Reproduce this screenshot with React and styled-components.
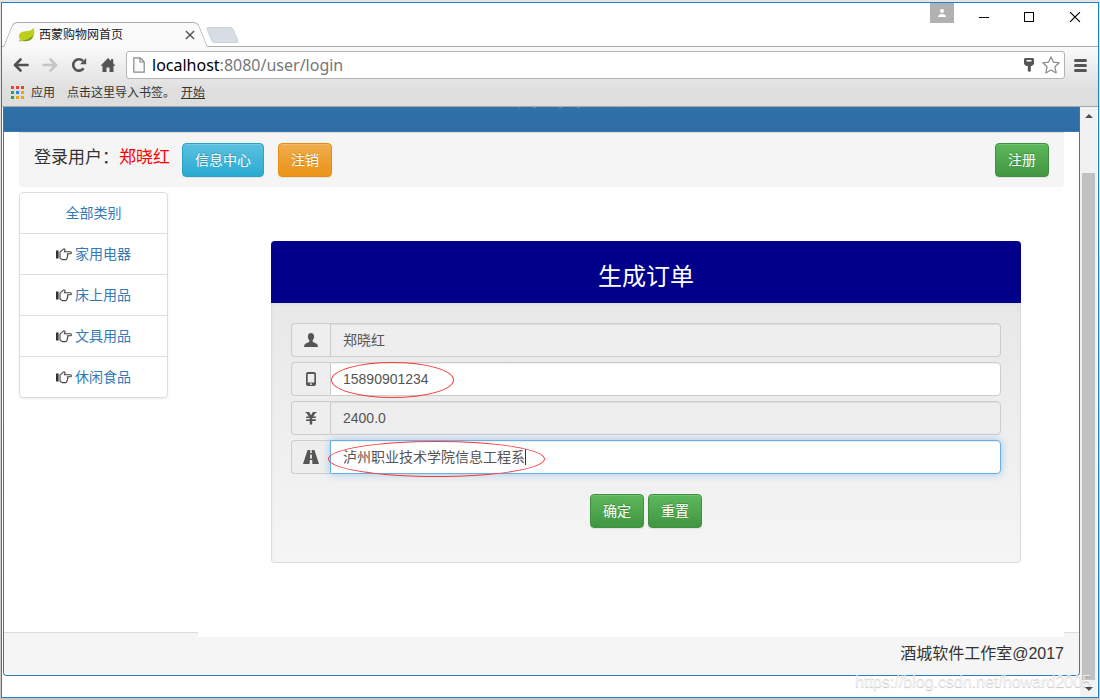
import React from "react";
import styled, { createGlobalStyle, css } from "styled-components";

const GlobalStyle = createGlobalStyle`
  * {
    box-sizing: border-box;
  }
  body {
    margin: 0;
    color: #333;
    font-family: "Liberation Sans", "Noto Sans CJK SC", sans-serif;
    font-size: 14px;
    line-height: 20px;
  }
  button, input {
    font: inherit;
    margin: 0;
  }
`;

const Desktop = styled.div`
  display: flex;
  min-height: 100vh;
  padding: 2px 1px;
  background: linear-gradient(#e6e6e6, #c8c8c8);
`;

const BrowserWindow = styled.div`
  position: relative;
  flex: 1;
  min-width: 0;
  display: flex;
  flex-direction: column;
  border: 1px solid #1f7fcf;
  background: #fff;
`;

/* ---- tab strip ---- */

const TabStrip = styled.div`
  display: flex;
  align-items: flex-end;
  height: 44px;
  padding: 0 1px 0 6px;
  border-bottom: 1px solid #acacac;
`;

const Tab = styled.div`
  position: relative;
  display: flex;
  align-items: center;
  width: 195px;
  height: 25px;
  margin-bottom: -1px;
  padding: 0 8px 0 10px;
  font-size: 12px;
  &::before,
  &::after {
    content: "";
    position: absolute;
    top: 0;
    bottom: 0;
    width: 55%;
    background: #fafafa;
    border-top: 1px solid #acacac;
  }
  &::before {
    left: 0;
    border-left: 1px solid #acacac;
    border-top-left-radius: 5px;
    transform: skewX(-22deg);
  }
  &::after {
    right: 0;
    border-right: 1px solid #acacac;
    border-top-right-radius: 5px;
    transform: skewX(22deg);
  }
  > * {
    position: relative;
    z-index: 1;
  }
`;

const TabTitle = styled.span`
  flex: 1;
  padding-left: 4px;
  color: #222;
`;

const PlainButton = styled.button`
  display: flex;
  align-items: center;
  justify-content: center;
  padding: 0;
  border: 0;
  background: none;
  color: #555;
`;

const NewTabButton = styled.button`
  width: 27px;
  height: 16px;
  margin: 0 0 3px 6px;
  padding: 0;
  border: 1px solid #ccd2da;
  border-radius: 3px;
  background: #d8dde5;
  transform: skewX(22deg);
`;

const WindowButtons = styled.div`
  display: flex;
  align-self: flex-start;
  margin-left: auto;
`;

const UserBadge = styled(PlainButton)`
  width: 24px;
  height: 20px;
  margin-right: 8px;
  background: #b1b1b1;
`;

const WindowButton = styled(PlainButton)`
  width: 45px;
  height: 28px;
`;

/* ---- toolbar ---- */

const Toolbar = styled.div`
  padding-top: 4px;
  border-bottom: 1px solid #a8a8a8;
  background: linear-gradient(#fafafa, #dedede 75%);
`;

const AddressRow = styled.div`
  display: flex;
  align-items: center;
  height: 28px;
  padding: 0 2px 0 4px;
`;

const NavButton = styled(PlainButton)`
  width: 29px;
  height: 28px;
`;

const AddressBar = styled.div`
  flex: 1;
  display: flex;
  align-items: center;
  height: 28px;
  margin-left: 4px;
  padding: 0 2px 0 6px;
  border: 1px solid #b4b4b4;
  border-radius: 3px;
  background: #fff;
`;

const Url = styled.span`
  flex: 1;
  padding-left: 7px;
  font-family: "Noto Sans", "Open Sans", sans-serif;
  font-size: 16px;
  color: #777;
  b {
    font-weight: normal;
    color: #000;
  }
`;

const AddressIcon = styled(PlainButton)`
  width: 22px;
  height: 24px;
`;

const MenuButton = styled(PlainButton)`
  width: 31px;
  height: 28px;
`;

const BookmarkRow = styled.div`
  display: flex;
  align-items: center;
  gap: 7px;
  height: 27px;
  padding-left: 9px;
  font-size: 12px;
  color: #333;
`;

const BookmarkLink = styled.a`
  color: #333;
  text-decoration: ${props => (props.$underline ? "underline" : "none")};
`;

const BookmarkHint = styled.span`
  margin: 0 -1px 0 5px;
`;

/* ---- page ---- */

const Viewport = styled.div`
  flex: 1;
  display: flex;
  padding: 0 1px;
`;

const PagePanel = styled.div`
  flex: 1;
  min-width: 0;
  display: flex;
  flex-direction: column;
  margin-bottom: 21px;
  border: solid #337ab7;
  border-width: 0 1px 1px;
  border-radius: 0 0 4px 4px;
  background: #fff;
`;

/* scrolled so that only the feet of the title still show */
const PageHeader = styled.header`
  display: flex;
  align-items: flex-end;
  justify-content: center;
  height: 25px;
  padding-bottom: 20px;
  overflow: hidden;
  border-bottom: 1px solid #337ab7;
  background: linear-gradient(#3071aa, #2e6da4);
  color: #fff;
`;

const PageTitle = styled.h1`
  margin: 0;
  font-size: 30px;
  font-weight: normal;
  line-height: 34px;
`;

const UserBar = styled.nav`
  display: flex;
  align-items: flex-start;
  gap: 14px;
  margin: 0 15px;
  padding: 10px 15px 10px;
  border-top: 1px solid #ddd;
  border-radius: 0 0 4px 4px;
  background: #f5f5f5;
`;

const Greeting = styled.span`
  margin-right: -2px;
  font-size: 17px;
  line-height: 30px;
  em {
    font-style: normal;
    color: red;
  }
`;

const tones = {
  info: ["#5bc0de", "#2aabd2", "#28a4c9"],
  warning: ["#f0ad4e", "#eb9316", "#e38d13"],
  success: ["#5cb85c", "#419641", "#3e8f3e"]
};

const Button = styled.button`
  height: 34px;
  padding: 0 12px;
  border: 1px solid ${props => tones[props.$tone][2]};
  border-radius: 4px;
  background: linear-gradient(
    ${props => tones[props.$tone][0]},
    ${props => tones[props.$tone][1]}
  );
  box-shadow: inset 0 1px 0 rgba(255, 255, 255, 0.15),
    0 1px 1px rgba(0, 0, 0, 0.075);
  color: #fff;
  text-shadow: 0 -1px 0 rgba(0, 0, 0, 0.2);
  &:last-child {
    margin-left: ${props => (props.$pushRight ? "auto" : "0")};
  }
`;

const Columns = styled.div`
  flex: 1;
  display: flex;
  align-items: stretch;
  gap: 30px;
  padding: 5px 15px 0;
`;

const CategoryList = styled.ul`
  align-self: flex-start;
  width: 149px;
  margin: 0;
  padding: 0;
  list-style: none;
  border: 1px solid #ddd;
  border-radius: 4px;
  box-shadow: 0 1px 2px rgba(0, 0, 0, 0.075);
`;

const CategoryItem = styled.li`
  display: flex;
  align-items: center;
  justify-content: center;
  gap: 3px;
  height: 41px;
  border-top: 1px solid #ddd;
  &:first-child {
    height: 40px;
    border-top: 0;
  }
  a {
    color: #337ab7;
    text-decoration: none;
  }
`;

const Main = styled.main`
  position: relative;
  flex: 1;
  min-width: 0;
  margin-bottom: -5px;
  padding: 49px 43px 74px 73px;
  background: #fff;
`;

const Card = styled.section`
  border: 1px solid #dcdcdc;
  border-top: 0;
  border-radius: 4px;
`;

const CardTitle = styled.h2`
  margin: 0 -1px;
  padding: 21px 0 11px;
  border-radius: 4px 4px 0 0;
  background: #00008b;
  color: #fff;
  font-size: 24px;
  font-weight: normal;
  line-height: 30px;
  text-align: center;
`;

const OrderForm = styled.form`
  display: flex;
  flex-direction: column;
  gap: 5px;
  padding: 20px 19px 34px;
  border-radius: 0 0 4px 4px;
  background: linear-gradient(#e8e8e8, #f5f5f5);
  box-shadow: inset 0 1px 3px rgba(0, 0, 0, 0.05);
`;

const InputGroup = styled.div`
  position: relative;
  display: flex;
  height: 34px;
`;

const Addon = styled.label`
  display: flex;
  align-items: center;
  justify-content: center;
  width: 39px;
  border: 1px solid #ccc;
  border-right: 0;
  border-radius: 4px 0 0 4px;
  background: #eee;
  color: #555;
`;

const TextInput = styled.input`
  flex: 1;
  min-width: 0;
  padding: 0 12px;
  border: 1px solid #ccc;
  border-radius: 0 4px 4px 0;
  outline: 0;
  background: #fff;
  box-shadow: inset 0 1px 1px rgba(0, 0, 0, 0.075);
  color: #555;
  &:read-only {
    background: #eee;
  }
  ${props =>
    props.$active &&
    css`
      border-color: #66afe9;
      box-shadow: inset 0 1px 1px rgba(0, 0, 0, 0.075),
        0 0 8px rgba(102, 175, 233, 0.6);
    `}
`;

const Caret = styled.span`
  position: absolute;
  top: 9px;
  left: 234px;
  width: 1px;
  height: 16px;
  background: #333;
`;

/* red pen mark drawn over a field */
const Mark = styled.span`
  position: absolute;
  top: ${props => (props.$wide ? "1px" : "0")};
  left: ${props => (props.$wide ? "37px" : "40px")};
  width: ${props => (props.$wide ? "217px" : "123px")};
  height: 36px;
  border: 1px solid #f83c3c;
  border-radius: 50%;
  pointer-events: none;
`;

const FormButtons = styled.div`
  display: flex;
  justify-content: center;
  gap: 4px;
  padding-top: 15px;
`;

const Footer = styled.footer`
  padding: 11px 15px;
  border-top: 1px solid #ddd;
  border-radius: 0 0 4px 4px;
  background: #f5f5f5;
  font-size: 16px;
  text-align: right;
`;

const Scrollbar = styled.div`
  display: flex;
  flex-direction: column;
  width: 17px;
  background: #f1f1f1;
`;

const ScrollButton = styled(PlainButton)`
  height: 17px;
`;

const ScrollTrack = styled.div`
  flex: 1;
  display: flex;
  padding: 49px 2px 0;
`;

const ScrollThumb = styled.div`
  flex: 1;
  background: #c1c1c1;
`;

const Watermark = styled.div`
  position: absolute;
  right: 7px;
  bottom: 5px;
  font-size: 16px;
  color: rgba(255, 255, 255, 0.8);
  text-shadow: 0 1px 1px rgba(0, 0, 0, 0.25);
  pointer-events: none;
`;

/* ---- icons ---- */

const Leaf = () => (
  <svg width="17" height="16" viewBox="0 0 17 16">
    <path d="M1 9.500C1 5 5 4.500 9 4c3-.3 5-1 6.500-3 1.500 4 1 9-2.500 11.500-3 2-7 2-10 1-1-.8-2-2.500-2-4z" fill="#bccf1c" />
    <path d="M3 13.500c5 0 9-1.500 12-5.500-.3 2.500-1 4-3 5-3 1.500-7 1.500-9 .5z" fill="#6f9a26" />
    <path d="M1 13l2 1.500" stroke="#8aad24" />
  </svg>
);

const Cross = ({ size, width, color }) => (
  <svg width={size} height={size} viewBox="0 0 11 11">
    <path d="M1 1l9 9M10 1l-9 9" stroke={color} strokeWidth={width} />
  </svg>
);

const Arrow = ({ flip, color }) => (
  <svg width="16" height="14" viewBox="0 0 16 14">
    <path
      d="M7.500 1.500L2 7l5.500 5.500M2.500 7h12"
      transform={flip ? "translate(16 0) scale(-1 1)" : undefined}
      fill="none"
      stroke={color}
      strokeWidth="2.600"
      strokeLinejoin="round"
      strokeLinecap="round"
    />
  </svg>
);

const Reload = () => (
  <svg width="16" height="16" viewBox="0 0 16 16">
    <path d="M12.600 11.200A5.700 5.700 0 1 1 12 4" fill="none" stroke="#555" strokeWidth="2.600" />
    <path d="M15.200 1v6.200H9z" fill="#555" />
  </svg>
);

const Home = () => (
  <svg width="16" height="16" viewBox="0 0 16 16">
    <path d="M8 1L.5 8.700h2V15h4v-4.600h3V15h4V8.700h2l-2.300-2.400V2h-2.100v2z" fill="#555" />
  </svg>
);

const FileIcon = () => (
  <svg width="12" height="16" viewBox="0 0 12 16">
    <path d="M.8.8h6.400l4 4v10.400H.8zM7 .8V5h4.200" fill="#fafafa" stroke="#888" strokeWidth="1.200" />
  </svg>
);

const KeyIcon = () => (
  <svg width="10" height="14" viewBox="0 0 10 14">
    <path fillRule="evenodd" d="M1 0h8l1 1v5L8 8H6.800v5L5.500 14 3.800 13V8H2L0 6V1zM2.500 2v1.500h5V2z" fill="#555" />
  </svg>
);

const StarIcon = () => (
  <svg width="18" height="18" viewBox="0 0 18 18">
    <path
      d="M9 .8l2.400 5.400 5.900.6-4.400 4 1.300 6.200L9 13.900 3.800 17l1.300-6.200-4.400-4 5.900-.6z"
      fill="#fff"
      stroke="#8a8a8a"
      strokeWidth="1.200"
      strokeLinejoin="round"
    />
  </svg>
);

const MenuIcon = () => (
  <svg width="13" height="13" viewBox="0 0 13 13">
    <path d="M1.500 1.500h10M1.500 6.500h10M1.500 11.500h10" stroke="#555" strokeWidth="3" strokeLinecap="round" />
  </svg>
);

const appColors = [
  "#ea4335", "#ea4335", "#ea4335",
  "#2e9e4f", "#2a84f0", "#f0a30a",
  "#2e9e4f", "#f0a30a", "#f0a30a"
];

const AppsIcon = () => (
  <svg width="13" height="13" viewBox="0 0 13 13">
    {appColors.map((color, i) => (
      <rect key={i} x={(i % 3) * 5} y={Math.floor(i / 3) * 5} width="3" height="3" fill={color} />
    ))}
  </svg>
);

const HandRight = () => (
  <svg width="16" height="13" viewBox="0 0 16 13">
    <path d="M0 2.500h2.600v8H0z" fill="#333" />
    <path
      d="M4 10V4.200L7.300 1.200c1-.9 2.200.2 1.600 1.200L8.300 3.700h6.200c1.200 0 1.200 2 0 2h-3.200c.9.700.7 1.700 0 2 .5.700.3 1.600-.4 1.900.2 1.100-.3 2-1.400 2H6.200z"
      fill="#fff"
      stroke="#444"
      strokeWidth="1.100"
      strokeLinejoin="round"
    />
  </svg>
);

const glyphs = {
  user: "M7 0C5 0 3.900 1.500 3.900 3.600c0 1.600.6 3 1.500 3.800v1.200C5 9.800 1.800 10 .7 11.500.2 12.200 0 13 0 14h14c0-1-.2-1.800-.7-2.500C12.200 10 9 9.800 8.600 8.600V7.400c.9-.8 1.500-2.200 1.500-3.800C10.100 1.500 9 0 7 0z",
  phone: "M4 0h6a2 2 0 0 1 2 2v10a2 2 0 0 1-2 2H4a2 2 0 0 1-2-2V2a2 2 0 0 1 2-2zM3.700 2v8.500h6.600V2zM6 11.500v1.300h2v-1.300z",
  yen: "M1.500 1h3.700L7 4.300 8.800 1h3.700v1h-1L9.200 5.500h2.900l-.6 1.600H8.200v1.200h3.900l-.6 1.600H8.200V13.500H5.800V9.900H1.900l.6-1.600h3.300V7.100H1.900l.6-1.600h2.300L2.500 2h-1z",
  road: "M3.600 0h2.700L6.200 3h1.600L7.700 0h2.700L15 14H8.400L8.200 10H5.800L5.600 14H-1zM6.200 4.500L6 8.500h2L7.800 4.500z"
};

const Glyph = ({ name }) => (
  <svg width="16" height="14" viewBox="-1 0 16 14" aria-hidden="true">
    <path d={glyphs[name]} fill="currentColor" fillRule="evenodd" />
  </svg>
);

const Triangle = ({ down }) => (
  <svg width="8" height="4" viewBox="0 0 8 4">
    <path d={down ? "M0 0h8L4 4z" : "M0 4h8L4 0z"} fill="#505050" />
  </svg>
);

const categories = ["家用电器", "床上用品", "文具用品", "休闲食品"];

const fields = [
  { id: "username", icon: "user", label: "用户名", value: "郑晓红", readOnly: true },
  { id: "telephone", icon: "phone", label: "电话", value: "15890901234", marked: true },
  { id: "total", icon: "yen", label: "总金额", value: "2400.0", readOnly: true },
  { id: "address", icon: "road", label: "地址", value: "泸州职业技术学院信息工程系", marked: true, active: true }
];

const BrowserChrome = () => (
  <>
    <TabStrip>
      <Tab>
        <Leaf />
        <TabTitle>西蒙购物网首页</TabTitle>
        <PlainButton aria-label="关闭标签页">
          <Cross size={10} width={1.6} color="#555" />
        </PlainButton>
      </Tab>
      <NewTabButton aria-label="新标签页" />
      <WindowButtons>
        <UserBadge aria-label="用户">
          <svg width="8" height="9" viewBox="0 0 8 9">
            <path d="M2 2a2 2 0 1 1 4 0 2 2 0 0 1-4 0zM0 8c0-4 8-4 8 0z" fill="#fff" />
          </svg>
        </UserBadge>
        <WindowButton aria-label="最小化">
          <svg width="11" height="10">
            <path d="M0 5.500h10" stroke="#000" />
          </svg>
        </WindowButton>
        <WindowButton aria-label="最大化">
          <svg width="11" height="10">
            <rect x=".5" y=".5" width="9" height="9" fill="none" stroke="#000" />
          </svg>
        </WindowButton>
        <WindowButton aria-label="关闭">
          <Cross size={12} width={1.1} color="#000" />
        </WindowButton>
      </WindowButtons>
    </TabStrip>
    <Toolbar>
      <AddressRow>
        <NavButton aria-label="后退"><Arrow color="#505050" /></NavButton>
        <NavButton aria-label="前进"><Arrow flip color="#c4c4c4" /></NavButton>
        <NavButton aria-label="刷新"><Reload /></NavButton>
        <NavButton aria-label="主页"><Home /></NavButton>
        <AddressBar>
          <FileIcon />
          <Url><b>localhost</b>:8080/user/login</Url>
          <AddressIcon aria-label="密码"><KeyIcon /></AddressIcon>
          <AddressIcon aria-label="收藏"><StarIcon /></AddressIcon>
        </AddressBar>
        <MenuButton aria-label="菜单"><MenuIcon /></MenuButton>
      </AddressRow>
      <BookmarkRow>
        <AppsIcon />
        <BookmarkLink href="#apps">应用</BookmarkLink>
        <BookmarkHint>点击这里导入书签。</BookmarkHint>
        <BookmarkLink href="#start" $underline>开始</BookmarkLink>
      </BookmarkRow>
    </Toolbar>
  </>
);

const Field = ({ field }) => (
  <InputGroup>
    <Addon htmlFor={field.id} aria-label={field.label}>
      <Glyph name={field.icon} />
    </Addon>
    <TextInput
      id={field.id}
      defaultValue={field.value}
      readOnly={field.readOnly}
      $active={field.active}
    />
    {field.active && <Caret />}
    {field.marked && <Mark $wide={field.active} />}
  </InputGroup>
);

class App extends React.Component {
  render() {
    return (
      <Desktop>
        <GlobalStyle />
        <BrowserWindow>
          <BrowserChrome />
          <Viewport>
            <PagePanel>
              <PageHeader>
                <PageTitle>西蒙购物网首页</PageTitle>
              </PageHeader>
              <UserBar>
                <Greeting>
                  登录用户：<em>郑晓红</em>
                </Greeting>
                <Button $tone="info">信息中心</Button>
                <Button $tone="warning">注销</Button>
                <Button $tone="success" $pushRight>注册</Button>
              </UserBar>
              <Columns>
                <CategoryList>
                  <CategoryItem>
                    <a href="#all">全部类别</a>
                  </CategoryItem>
                  {categories.map(name => (
                    <CategoryItem key={name}>
                      <HandRight />
                      <a href={"#" + name}>{name}</a>
                    </CategoryItem>
                  ))}
                </CategoryList>
                <Main>
                  <Card>
                    <CardTitle>生成订单</CardTitle>
                    <OrderForm onSubmit={e => e.preventDefault()}>
                      {fields.map(field => (
                        <Field key={field.id} field={field} />
                      ))}
                      <FormButtons>
                        <Button $tone="success">确定</Button>
                        <Button $tone="success" type="reset">重置</Button>
                      </FormButtons>
                    </OrderForm>
                  </Card>
                </Main>
              </Columns>
              <Footer>酒城软件工作室@2017</Footer>
            </PagePanel>
            <Scrollbar>
              <ScrollButton aria-label="向上滚动"><Triangle /></ScrollButton>
              <ScrollTrack>
                <ScrollThumb />
              </ScrollTrack>
              <ScrollButton aria-label="向下滚动"><Triangle down /></ScrollButton>
            </Scrollbar>
          </Viewport>
          <Watermark>https://blog.csdn.net/howard2005</Watermark>
        </BrowserWindow>
      </Desktop>
    );
  }
}

export default App;
